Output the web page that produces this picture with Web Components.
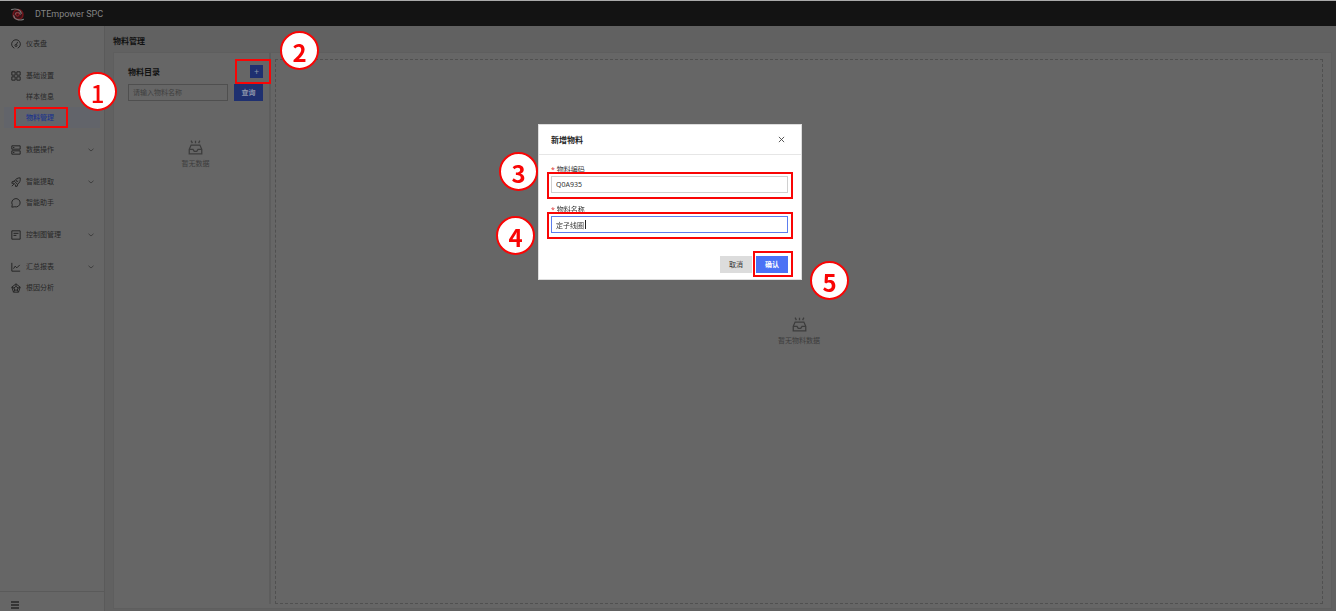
<!DOCTYPE html>
<html lang="zh-CN">
<head>
<meta charset="UTF-8">
<meta name="viewport" content="width=device-width, initial-scale=1">
<title>DTEmpower SPC - 物料管理</title>
<style>
    :root {
        --header: #131313;
        --surface: #666;
        --canvas: #616161;
        --line: #5a5a5a;
        --text: #262626;
        --strong: #111;
        --muted: #3c3c3c;
        --primary-dim: #1f3070;
        --primary: #4b72f5;
        --mark: #f90505;
    }
    html, body { height: 100%; }
    body {
        margin: 0;
        overflow: hidden;
        background: var(--canvas);
        color: var(--text);
        font: 7px/12px "Noto Sans", "Noto Sans CJK SC", sans-serif;
    }
</style>
</head>
<body>
<spc-app></spc-app>

<script>
    const ICONS = {
        gauge: '<path d="M8 22A10.500 10.500 0 1 1 16 22M13 13l3-6M12 18a2.500 2.500 0 1 0 0-5a2.500 2.500 0 0 0 0 5"/>',
        grid: '<path d="M2 2h8v8H2zM14 2h8v8h-8zM2 14h8v8H2zM14 14h8v8h-8z"/>',
        server: '<path d="M2 2h20v8H2zM2 14h20v8H2zM5 6h3M5 18h3"/>',
        rocket: '<path d="M22 2c-7 0-11 3-14 8l-5 1-1 4 5 0 4 4 0 4 4-1 1-5c5-3 7-8 6-15zM8 10l7 7M2 22l5-5M15 7a2 2 0 1 0 2 2"/>',
        chat: '<path d="M2 22l1-6A10 10 0 1 1 9 21z"/>',
        board: '<path d="M2 2h20v20H2zM6 8h12M6 13h7"/>',
        chart: '<path d="M2 2v20h20M6 16l4-6 4 4 7-7"/>',
        pentagon: '<path d="M12 2L22 10L18 22H6L2 10zM12 8l5 4-2 5H9l-2-5zM12 2v6M22 10l-5 2M18 22l-3-5M6 22l3-5M2 10l5 2"/>',
        down: '<path d="M2 7l10 9 10-9"/>',
        menu: '<path d="M0 3h24M0 12h24M0 21h24"/>',
        close: '<path d="M3 3l18 18M21 3L3 21"/>',
        inbox: '<path d="M2 15v7h20v-7l-3-7H5zM2 15h6l2 3h4l2-3h6M12 1v4M5 1l2 4M19 1l-2 4"/>'
    };

    function define(name, css, html) {
        const template = document.createElement('template');
        template.innerHTML = `<style>*{box-sizing:border-box}:host{display:block;box-sizing:border-box}${css}</style>${html}`;
        customElements.define(name, class extends HTMLElement {
            constructor() {
                super();
                this.attachShadow({ mode: 'open' }).appendChild(template.content.cloneNode(true));
            }
        });
    }

    // Line icon, picked by name
    class SpcIcon extends HTMLElement {
        constructor() {
            super();
            this.attachShadow({ mode: 'open' });
        }

        connectedCallback() {
            this.shadowRoot.innerHTML = `
                <style>
                    :host { display: block; flex: none; width: 10px; height: 10px; }
                    svg { display: block; width: 100%; height: 100%; fill: none; stroke: currentColor; stroke-width: var(--stroke, 2.4); }
                </style>
                <svg viewBox="0 0 24 24" aria-hidden="true">${ICONS[this.getAttribute('name')]}</svg>
            `;
        }
    }
    customElements.define('spc-icon', SpcIcon);

    // Numbered step marker
    define('step-badge', `
        :host {
            display: flex;
            align-items: center;
            justify-content: center;
            width: 39px;
            height: 39px;
            padding-top: 2px;
            border: 2px solid var(--mark);
            border-radius: 50%;
            background: #fff;
            color: var(--mark);
            font: 700 24px/34px "Noto Sans CJK SC", sans-serif;
        }
        :host([light]) { font-weight: 500; }
    `, '<slot></slot>');

    define('step-frame', `
        :host { border: 2px solid var(--mark); pointer-events: none; }
    `, '');

    define('spc-header', `
        :host {
            display: flex;
            align-items: center;
            gap: 11px;
            height: 26px;
            padding: 1px 11px 0;
            border-top: 1px solid #aaa;
            background: var(--header);
            color: #848484;
            font-family: Roboto, sans-serif;
            font-size: 9px;
        }
        svg { width: 13px; height: 13px; fill: none; stroke-linecap: round; }
    `, `
        <svg viewBox="0 0 24 24" aria-hidden="true">
            <circle cx="13" cy="12" r="9" fill="#3a1216" stroke="#70151c" stroke-width="3"/>
            <path stroke="#777" stroke-width="2" d="M1 3c8-3 17 0 18 7M23 21c-8 3-17 0-18-7M8 12c0-5 8-5 9 0"/>
            <circle cx="12" cy="12" r="3" stroke="#8b2028" stroke-width="2"/>
        </svg>
        <span>DTEmpower SPC</span>
    `);

    // Sidebar entry: icon, label and an optional arrow
    class NavItem extends HTMLElement {
        constructor() {
            super();
            this.attachShadow({ mode: 'open' });
        }

        connectedCallback() {
            const icon = this.getAttribute('icon');
            this.shadowRoot.innerHTML = `
                <style>
                    :host { display: block; }
                    a {
                        display: grid;
                        grid-template-columns: 10px 1fr 6px;
                        align-items: center;
                        column-gap: 5px;
                        height: 21px;
                        margin: 0 4px;
                        padding: 0 6px 0 7px;
                        color: inherit;
                        text-decoration: none;
                    }
                    .label { grid-column: 2; white-space: nowrap; }
                    .arrow { width: 6px; height: 6px; }
                    :host([active]) a { background: #62646a; color: #20368a; font-weight: 500; }
                </style>
                <a href="#">
                    ${icon ? `<spc-icon name="${icon}"></spc-icon>` : ''}
                    <span class="label"><slot></slot></span>
                    ${this.hasAttribute('arrow') ? '<spc-icon class="arrow" name="down"></spc-icon>' : ''}
                </a>
            `;
        }
    }
    customElements.define('nav-item', NavItem);

    define('spc-sidebar', `
        :host {
            display: flex;
            flex-direction: column;
            justify-content: space-between;
            border-right: 1px solid var(--line);
            background: var(--surface);
        }
        nav { display: flex; flex-direction: column; gap: 11px; padding-top: 7px; }
        .marked { position: relative; }
        step-frame { position: absolute; left: 14px; top: 0; width: 54px; height: 21px; }
        step-badge { position: absolute; left: 78px; top: -35px; z-index: 1; }
        .foot { display: flex; padding: 9px 11px 2px; border-top: 1px solid var(--line); }
        button { padding: 0; border: 0; background: none; color: inherit; }
        .foot spc-icon { width: 8px; height: 8px; --stroke: 4; }
    `, `
        <nav>
            <nav-item icon="gauge">仪表盘</nav-item>
            <div>
                <nav-item icon="grid">基础设置</nav-item>
                <nav-item>样本信息</nav-item>
                <div class="marked">
                    <nav-item active>物料管理</nav-item>
                    <step-frame></step-frame>
                    <step-badge light>1</step-badge>
                </div>
            </div>
            <nav-item icon="server" arrow>数据操作</nav-item>
            <div>
                <nav-item icon="rocket" arrow>智能提取</nav-item>
                <nav-item icon="chat">智能助手</nav-item>
            </div>
            <nav-item icon="board" arrow>控制图管理</nav-item>
            <div>
                <nav-item icon="chart" arrow>汇总报表</nav-item>
                <nav-item icon="pentagon">根因分析</nav-item>
            </div>
        </nav>
        <div class="foot"><button aria-label="收起菜单"><spc-icon name="menu"></spc-icon></button></div>
    `);

    define('empty-state', `
        :host { display: flex; flex-direction: column; align-items: center; gap: 3px; color: var(--muted); }
        spc-icon { width: 15px; height: 15px; --stroke: 2; }
    `, '<spc-icon name="inbox"></spc-icon><span><slot></slot></span>');

    define('material-catalog', `
        :host { padding: 12px 6px 0 14px; border-right: 2px solid #5d5d5d; }
        .head { display: flex; align-items: center; justify-content: space-between; height: 13px; }
        h2 { margin: 0; color: var(--strong); font-size: 8px; }
        .marked { position: relative; }
        button { display: block; padding: 0; border: 0; background: var(--primary-dim); color: #8d94aa; font: inherit; }
        .add { width: 13px; height: 13px; font-size: 9px; line-height: 12px; }
        step-frame { position: absolute; left: -15px; top: -6px; width: 36px; height: 25px; }
        step-badge { position: absolute; left: 30px; top: -34px; z-index: 1; }
        form { display: flex; gap: 6px; margin-top: 6px; }
        input {
            flex: 1;
            min-width: 0;
            height: 17px;
            padding: 0 4px;
            border: 1px solid #4f4f4f;
            background: none;
            font: inherit;
        }
        input::placeholder { color: #3f3f3f; }
        .search { width: 29px; height: 17px; font-weight: 700; }
        empty-state { margin-top: 39px; }
    `, `
        <div class="head">
            <h2>物料目录</h2>
            <div class="marked">
                <button class="add" aria-label="新增">+</button>
                <step-frame></step-frame>
                <step-badge>2</step-badge>
            </div>
        </div>
        <form>
            <input type="text" aria-label="物料名称" placeholder="请输入物料名称">
            <button class="search" type="button">查询</button>
        </form>
        <empty-state>暂无数据</empty-state>
    `);

    define('material-page', `
        :host { display: flex; flex-direction: column; padding: 9px 4px 2px 8px; min-width: 0; }
        h1 { margin: 0; color: var(--strong); font-size: 8px; line-height: 12px; }
        .card {
            display: grid;
            grid-template-columns: 157px 1fr;
            column-gap: 4px;
            flex: 1;
            margin-top: 5px;
            padding: 0 8px 4px 0;
            border: 1px solid #5e5e5e;
            background: var(--surface);
        }
        .detail {
            display: flex;
            align-items: center;
            justify-content: center;
            margin-top: 6px;
            border: 1px dashed #505050;
        }
    `, `
        <h1>物料管理</h1>
        <div class="card">
            <material-catalog></material-catalog>
            <div class="detail"><empty-state>暂无物料数据</empty-state></div>
        </div>
    `);

    define('material-dialog', `
        :host {
            position: relative;
            width: 264px;
            border: 1px solid #ddd;
            background: #fff;
            color: #333;
        }
        header {
            display: flex;
            align-items: center;
            justify-content: space-between;
            height: 30px;
            padding: 0 16px 0 12px;
            border-bottom: 1px solid #e6e6e6;
        }
        h2 { margin: 0; color: #222; font-size: 8px; }
        button { padding: 0; border: 0; font: inherit; }
        .close { background: none; color: #444; }
        .close spc-icon { width: 7px; height: 7px; --stroke: 3; }
        form { padding: 9px 13px 6px 12px; }
        .field { position: relative; margin-bottom: 11px; }
        label { display: block; line-height: 12px; }
        label::before { content: "* "; color: #e03030; }
        input {
            display: block;
            width: 100%;
            height: 17px;
            padding: 0 4px;
            border: 1px solid #d0d0d0;
            background: #fff;
            color: #333;
            font: inherit;
        }
        input.focused { border-color: #5d7eee; outline: 0; }
        .field step-frame { position: absolute; left: -4px; right: -5px; top: 8px; height: 27px; }
        .caret { position: absolute; left: 34px; bottom: 4px; width: 1px; height: 9px; background: #222; }
        .code step-badge { position: absolute; left: -52px; top: -12px; }
        .name step-badge { position: absolute; left: -55px; top: 12px; }
        footer { display: flex; justify-content: flex-end; gap: 4px; margin-top: 23px; }
        footer button { display: block; width: 32px; height: 17px; }
        .cancel { background: #dcdcdc; color: #333; }
        .ok { background: var(--primary); color: #fff; font-weight: 700; }
        .marked { position: relative; }
        .marked step-frame { position: absolute; left: -3px; top: -5px; width: 40px; height: 26px; }
        .marked step-badge { position: absolute; left: 54px; top: 5px; }
    `, `
        <header>
            <h2>新增物料</h2>
            <button class="close" aria-label="关闭"><spc-icon name="close"></spc-icon></button>
        </header>
        <form>
            <div class="field code">
                <label for="code">物料编码</label>
                <input id="code" type="text" value="Q0A935">
                <step-frame></step-frame>
                <step-badge>3</step-badge>
            </div>
            <div class="field name">
                <label for="name">物料名称</label>
                <input id="name" class="focused" type="text" value="定子线圈">
                <span class="caret"></span>
                <step-frame></step-frame>
                <step-badge>4</step-badge>
            </div>
            <footer>
                <button class="cancel" type="button">取消</button>
                <div class="marked">
                    <button class="ok" type="button">确认</button>
                    <step-frame></step-frame>
                    <step-badge>5</step-badge>
                </div>
            </footer>
        </form>
    `);

    define('spc-app', `
        :host { display: flex; flex-direction: column; height: 100vh; }
        .body { display: grid; grid-template-columns: 105px 1fr; flex: 1; min-height: 0; }
        .overlay {
            position: fixed;
            inset: 0;
            display: flex;
            align-items: flex-start;
            justify-content: center;
            padding: 124px 0 0 4px;
        }
    `, `
        <spc-header></spc-header>
        <div class="body">
            <spc-sidebar></spc-sidebar>
            <material-page></material-page>
        </div>
        <div class="overlay"><material-dialog role="dialog" aria-label="新增物料"></material-dialog></div>
    `);
</script>
</body>
</html>
